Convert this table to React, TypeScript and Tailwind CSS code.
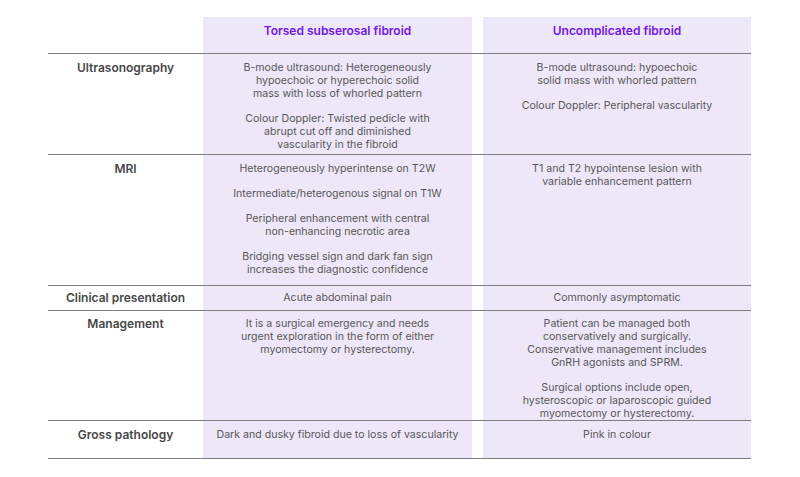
import React from 'react';

type Row = {
  label: string;
  a: string[][];
  b: string[][];
  h: string;
  pt: string;
};

const rows: Row[] = [
  {
    label: 'Ultrasonography',
    a: [
      ['B-mode ultrasound: Heterogeneously', 'hypoechoic or hyperechoic solid', 'mass with loss of whorled pattern'],
      ['Colour Doppler: Twisted pedicle with', 'abrupt cut off and diminished', 'vascularity in the fibroid'],
    ],
    b: [
      ['B-mode ultrasound: hypoechoic', 'solid mass with whorled pattern'],
      ['Colour Doppler: Peripheral vascularity'],
    ],
    h: 'h-[100px]',
    pt: 'pt-[7px]',
  },
  {
    label: 'MRI',
    a: [
      ['Heterogeneously hyperintense on T2W'],
      ['Intermediate/heterogenous signal on T1W'],
      ['Peripheral enhancement with central', 'non-enhancing necrotic area'],
      ['Bridging vessel sign and dark fan sign', 'increases the diagnostic confidence'],
    ],
    b: [['T1 and T2 hypointense lesion with', 'variable enhancement pattern']],
    h: 'h-[130px]',
    pt: 'pt-[7px]',
  },
  {
    label: 'Clinical presentation',
    a: [['Acute abdominal pain']],
    b: [['Commonly asymptomatic']],
    h: 'h-[24px]',
    pt: 'pt-[5px]',
  },
  {
    label: 'Management',
    a: [['It is a surgical emergency and needs', 'urgent exploration in the form of either', 'myomectomy or hysterectomy.']],
    b: [
      ['Patient can be managed both', 'conservatively and surgically.', 'Conservative management includes', 'GnRH agonists and SPRM.'],
      ['Surgical options include open,', 'hysteroscopic or laparoscopic guided', 'myomectomy or hysterectomy.'],
    ],
    h: 'h-[109px]',
    pt: 'pt-[6px]',
  },
  {
    label: 'Gross pathology',
    a: [['Dark and dusky fibroid due to loss of vascularity']],
    b: [['Pink in colour']],
    h: 'h-[37px]',
    pt: 'pt-[7px]',
  },
];

function Line() {
  return <div className="h-px bg-[#7f7f7f]" />;
}

function Cell({ paras, pt }: { paras: string[][]; pt: string }) {
  return (
    <div className={`bg-[#ede7f9] ${pt} flex flex-col gap-[12px] text-center text-[10.6px] leading-[13px] text-[#575757]`}>
      {paras.map((p, i) => (
        <p key={i}>
          {p.map((l, j) => (
            <span key={j} className="block whitespace-nowrap">{l}</span>
          ))}
        </p>
      ))}
    </div>
  );
}

export default function App() {
  return (
    <div className="w-[800px] h-[477px] bg-white pt-[17px] pl-[48px]" style={{ fontFamily: 'Inter, "Noto Sans", sans-serif' }}>
      <div className="w-[703px]">
        <div className="grid grid-cols-[155px_269px_11px_268px] h-[36px]">
          <div />
          <div className="bg-[#ede7f9] pt-[7px] text-center text-[12px] leading-[14px] font-semibold text-[#7216e4]">
            Torsed subserosal fibroid
          </div>
          <div />
          <div className="bg-[#ede7f9] pt-[7px] text-center text-[12px] leading-[14px] font-semibold text-[#7216e4]">
            Uncomplicated fibroid
          </div>
        </div>
        <Line />
        {rows.map((r) => (
          <div key={r.label}>
            <div className={`grid grid-cols-[155px_269px_11px_268px] ${r.h}`}>
              <div className={`${r.pt} text-center text-[12px] leading-[13px] font-semibold text-[#474747]`}>{r.label}</div>
              <Cell paras={r.a} pt={r.pt} />
              <div />
              <Cell paras={r.b} pt={r.pt} />
            </div>
            <Line />
          </div>
        ))}
      </div>
    </div>
  );
}
